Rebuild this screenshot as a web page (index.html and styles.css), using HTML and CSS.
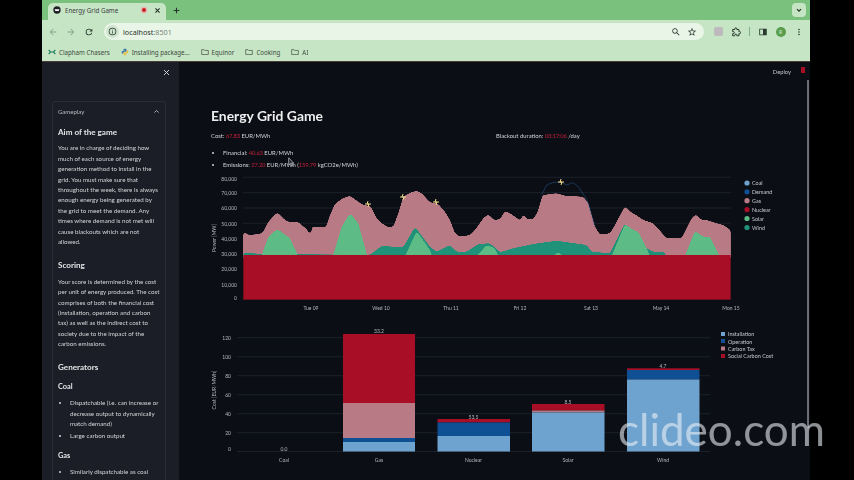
FILE: index.html
```html
<!DOCTYPE html>
<html lang="en">

<head>
    <meta charset="UTF-8">
    <meta name="viewport" content="width=device-width, initial-scale=1.0">
    <title>Energy Grid Game</title>
    <link rel="stylesheet" href="styles.css">
</head>

<body>
    <div class="browser">
        <div class="tabstrip">
            <div class="tab">
                <svg class="favicon" viewBox="0 0 12 12">
                    <circle cx="6" cy="6" r="5.5" class="ink"></circle>
                    <path d="M2.5 5h7l-1 2.5h-5z" class="white"></path>
                </svg>
                <span class="tab-title">Energy Grid Game</span>
                <svg class="rec" viewBox="0 0 12 12">
                    <circle cx="6" cy="6" r="5" class="rec-ring"></circle>
                    <circle cx="6" cy="6" r="3" class="rec-dot"></circle>
                </svg>
                <svg class="tab-x" viewBox="0 0 10 10"><path d="M2 2l6 6M8 2l-6 6" class="stroke-dark"></path></svg>
            </div>
            <svg class="plus" viewBox="0 0 10 10"><path d="M5 1v8M1 5h8" class="stroke-dark"></path></svg>
            <div class="tab-menu">
                <svg viewBox="0 0 10 10"><path d="M2.5 4l2.5 2.5L7.500 4" class="stroke-dark"></path></svg>
            </div>
        </div>

        <div class="toolbar">
            <svg class="tool faded" viewBox="0 0 24 24"><path d="M20 11H7.800l5.600-5.600L12 4l-8 8 8 8 1.400-1.400L7.800 13H20z"></path></svg>
            <svg class="tool faded" viewBox="0 0 24 24"><path d="M4 11h12.200l-5.600-5.600L12 4l8 8-8 8-1.400-1.400 5.600-5.600H4z"></path></svg>
            <svg class="tool" viewBox="0 0 24 24"><path d="M17.650 6.350A7.960 7.960 0 0 0 12 4a8 8 0 1 0 7.750 10h-2.080A6 6 0 1 1 12 6c1.660 0 3.140.69 4.220 1.780L13 11h7V4z"></path></svg>
            <div class="omnibox">
                <span class="site-info">
                    <svg viewBox="0 0 24 24"><path d="M11 7h2v2h-2zm0 4h2v6h-2zm1-9a10 10 0 1 0 0 20 10 10 0 0 0 0-20zm0 18a8 8 0 1 1 0-16 8 8 0 0 1 0 16z"></path></svg>
                </span>
                <span class="url">localhost<span class="port">:8501</span></span>
                <svg class="tool search" viewBox="0 0 24 24"><path d="M15.500 14h-.79l-.28-.27C15.410 12.590 16 11.110 16 9.500 16 5.910 13.090 3 9.500 3S3 5.910 3 9.500 5.910 16 9.500 16c1.610 0 3.090-.59 4.230-1.570l.27.28v.79l5 4.990L20.490 19l-4.990-5zm-6 0C7.010 14 5 11.990 5 9.500S7.010 5 9.500 5 14 7.010 14 9.500 11.990 14 9.500 14z"></path></svg>
                <svg class="tool" viewBox="0 0 24 24"><path d="M22 9.240l-7.190-.62L12 2 9.190 8.630 2 9.240l5.460 4.730L5.820 21 12 17.270 18.180 21l-1.630-7.030zM12 15.400l-3.760 2.270 1-4.280-3.320-2.880 4.380-.38L12 6.100l1.710 4.040 4.380.38-3.320 2.880 1 4.280z"></path></svg>
            </div>
            <span class="ext-badge"></span>
            <svg class="tool puzzle" viewBox="0 0 24 24"><path d="M4 6h5V4.500a2.500 2.500 0 0 1 5 0V6h5v5h1.500a2.500 2.500 0 0 1 0 5H19v5h-5v-1.500a2.500 2.500 0 0 0-5 0V21H4v-5h1.500a2.500 2.500 0 0 0 0-5H4z"></path></svg>
            <span class="tool-sep"></span>
            <svg class="tool" viewBox="0 0 24 24"><path d="M3 4h18v16H3zm2 2v12h7V6z" fill-rule="evenodd"></path></svg>
            <span class="avatar">R</span>
            <svg class="tool" viewBox="0 0 24 24"><path d="M12 8a2 2 0 1 0 0-4 2 2 0 0 0 0 4zm0 2a2 2 0 1 0 0 4 2 2 0 0 0 0-4zm0 6a2 2 0 1 0 0 4 2 2 0 0 0 0-4z"></path></svg>
        </div>

        <div class="bookmarks">
            <span class="bookmark first">
                <svg class="bm-icon" viewBox="0 0 12 12"><path d="M1 3l3 3-3 3M11 3L8 6l3 3M4 6h4" class="stroke-teal"></path></svg>
                Clapham Chasers
            </span>
            <span class="bookmark">
                <svg class="bm-icon" viewBox="0 0 12 12">
                    <path d="M6 1C4 1 3.500 2 3.500 3v1H6v.5H2.500C1.500 4.500 1 5.300 1 6.500S1.500 8.500 2.500 8.500h1V7c0-1 1-1.500 2-1.500h2C8 5.500 8.500 5 8.500 4.300V3C8.500 2 8 1 6 1z" class="py-blue"></path>
                    <path d="M6 11c2 0 2.500-1 2.500-2V8H6v-.5h3.500c1 0 1.500-.8 1.500-2s-.5-2-1.500-2h-1V5c0 1-1 1.500-2 1.500h-2C4 6.500 3.500 7 3.500 7.700V9c0 1 .5 2 2.500 2z" class="py-yellow"></path>
                </svg>
                Installing package...
            </span>
            <span class="bookmark">
                <svg class="bm-icon" viewBox="0 0 12 12"><path d="M1 2.500h3.500l1 1.200H11v6H1z" class="stroke-folder"></path></svg>
                Equinor
            </span>
            <span class="bookmark">
                <svg class="bm-icon" viewBox="0 0 12 12"><path d="M1 2.500h3.500l1 1.200H11v6H1z" class="stroke-folder"></path></svg>
                Cooking
            </span>
            <span class="bookmark">
                <svg class="bm-icon" viewBox="0 0 12 12"><path d="M1 2.500h3.500l1 1.200H11v6H1z" class="stroke-folder"></path></svg>
                AI
            </span>
        </div>

        <div class="app">
            <aside class="sidebar">
                <div class="sidebar-top">
                    <svg class="close" viewBox="0 0 10 10"><path d="M1.500 1.500l7 7M8.500 1.500l-7 7"></path></svg>
                </div>
                <div class="expander">
                    <div class="expander-head">
                        <span>Gameplay</span>
                        <svg viewBox="0 0 10 10"><path d="M2 6.500L5 3.500l3 3"></path></svg>
                    </div>
                    <h3 class="side-h first">Aim of the game</h3>
                    <p class="side-p">You are in charge of deciding how much of each source of energy generation method to install in the grid. You must make sure that throughout the week, there is always enough energy being generated by the grid to meet the demand. Any times where demand is not met will cause blackouts which are not allowed.</p>
                    <h3 class="side-h scoring">Scoring</h3>
                    <p class="side-p">Your score is determined by the cost per unit of energy produced. The cost comprises of both the financial cost (installation, operation and carbon tax) as well as the indirect cost to society due to the impact of the carbon emissions.</p>
                    <h3 class="side-h generators">Generators</h3>
                    <h4 class="side-sub coal">Coal</h4>
                    <ul class="side-list">
                        <li>Dispatchable (i.e. can increase or decrease output to dynamically match demand)</li>
                        <li>Large carbon output</li>
                    </ul>
                    <h4 class="side-sub gas">Gas</h4>
                    <ul class="side-list">
                        <li>Similarly dispatchable as coal</li>
                    </ul>
                </div>
            </aside>

            <main class="main">
                <div class="main-top">
                    <span class="deploy">Deploy</span>
                    <span class="st-menu"></span>
                </div>
                <div class="content">
                    <h1>Energy Grid Game</h1>
                    <div class="summary">
                        <div class="summary-cost">Cost: <span class="red">67.83</span> EUR/MWh</div>
                        <div>Blackout duration: <span class="red">03:17:06</span> /day</div>
                    </div>
                    <ul class="breakdown">
                        <li>Financial: <span class="red">40.63</span> EUR/MWh</li>
                        <li>Emissions: <span class="red">27.20</span> EUR/MWh (<span class="red">159.79</span> kgCO2e/MWh)</li>
                    </ul>
                </div>

                <svg class="chart chart-power" viewBox="200 170 610 150">
                    <defs>
                        <filter id="smooth" x="-5%" y="-5%" width="110%" height="110%" color-interpolation-filters="sRGB">
                            <feGaussianBlur stdDeviation="4"></feGaussianBlur>
                            <feColorMatrix values="1 0 0 0 0 0 1 0 0 0 0 0 1 0 0 0 0 0 14 -6.500"></feColorMatrix>
                        </filter>
                    </defs>
                    <g class="grid">
                        <path d="M243 177.300H731M243 192.700H731M243 208H731M243 223.300H731M243 238.700H731M243 254H731"></path>
                    </g>
                    <g transform="translate(200 170) scale(.3333)">
                        <path class="area-gas" filter="url(#smooth)" d="M130 270V183L145 195 180 192 190 185 205 155 232 127 255 150 270 157 295 156 320 178 332 195 338 165 345 172 378 172 390 135 405 102 428 85 450 77 475 95 490 105 512 108 530 145 545 160 565 172 580 170 595 130 610 80 630 68 650 62 665 70 690 97 715 102 735 125 750 150 765 190 780 200 810 195 825 180 850 145 865 133 882 150 900 148 915 123 930 130 955 147 962 153 970 130 980 148 1000 148 1013 125 1028 75 1070 70 1095 77 1150 80 1165 100 1185 170 1200 194 1230 190 1245 165 1275 108 1295 128 1305 133 1330 150 1360 160 1400 205 1445 205 1475 145 1488 133 1505 150 1520 150 1550 160 1570 165 1592 180V270Z"></path>
                        <path class="line-demand" d="M1025 75L1040 45 1060 37 1085 37 1100 45 1120 38 1135 50 1155 80 1165 100 1185 170"></path>
                        <path class="area-wind" filter="url(#smooth)" d="M130 270V247L180 252 510 254 545 228 610 232 645 170 690 230 710 245 750 225 770 245 800 245 835 222 870 220 900 247 940 235 1000 222 1070 212 1160 225 1175 245 1230 250 1275 160 1340 235 1360 245 1395 245 1400 270Z"></path>
                        <path class="area-solar" filter="url(#smooth)" d="M180 270L205 200 232 177 270 205 300 270ZM395 270L425 170 450 130 475 160 505 270ZM610 270L650 183 690 240 700 270ZM820 270L860 225 885 235 900 270ZM1045 270L1075 246 1105 270ZM1230 270L1275 162 1300 180 1315 185 1340 235 1355 270ZM1450 270L1485 183 1510 200 1530 200 1565 270Z"></path>
                        <rect class="area-nuclear" x="130" y="255" width="1462" height="134"></rect>
                    </g>
                    <g class="bolt">
                        <path d="M368 201l-1 3h2l-1 3M365 204h6"></path>
                        <path d="M403 194l-1 3h2l-1 3M400 197h6"></path>
                        <path d="M436 199l-1 3h2l-1 3M433 202h6"></path>
                        <path d="M561 179l-1 3h2l-1 3M558 182h6"></path>
                    </g>
                    <g class="tick end">
                        <text x="237" y="181">80,000</text>
                        <text x="237" y="195">70,000</text>
                        <text x="237" y="210">60,000</text>
                        <text x="237" y="225.500">50,000</text>
                        <text x="237" y="240.500">40,000</text>
                        <text x="237" y="256">30,000</text>
                        <text x="237" y="271">20,000</text>
                        <text x="237" y="286.500">10,000</text>
                        <text x="237" y="299.500">0</text>
                    </g>
                    <text class="tick" transform="translate(216 238) rotate(-90)" text-anchor="middle">Power [MW]</text>
                    <g class="tick mid">
                        <text x="311" y="310">Tue 09</text>
                        <text x="381" y="310">Wed 10</text>
                        <text x="451" y="310">Thu 11</text>
                        <text x="520" y="310">Fri 12</text>
                        <text x="591" y="310">Sat 13</text>
                        <text x="661" y="310">May 14</text>
                        <text x="731" y="310">Mon 15</text>
                    </g>
                    <g class="legend">
                        <circle cx="747" cy="183" r="2.600" class="c-coal"></circle>
                        <text x="752" y="185">Coal</text>
                        <circle cx="747" cy="191.800" r="2.600" class="c-demand"></circle>
                        <text x="752" y="193.800">Demand</text>
                        <circle cx="747" cy="200.700" r="2.600" class="c-gas"></circle>
                        <text x="752" y="202.700">Gas</text>
                        <circle cx="747" cy="209.600" r="2.600" class="c-nuclear"></circle>
                        <text x="752" y="211.600">Nuclear</text>
                        <circle cx="747" cy="218.500" r="2.600" class="c-solar"></circle>
                        <text x="752" y="220.500">Solar</text>
                        <circle cx="747" cy="227.500" r="2.600" class="c-wind"></circle>
                        <text x="752" y="229.500">Wind</text>
                    </g>
                </svg>

                <svg class="chart chart-cost" viewBox="200 320 610 160">
                    <g class="grid">
                        <path d="M237 337.700H710M237 356.700H710M237 375.700H710M237 394.700H710M237 413.700H710M237 432.700H710M237 451.500H710"></path>
                    </g>
                    <g class="tick end">
                        <text x="231" y="340">120</text>
                        <text x="231" y="359">100</text>
                        <text x="231" y="378">80</text>
                        <text x="231" y="397">60</text>
                        <text x="231" y="416">40</text>
                        <text x="231" y="435">20</text>
                        <text x="231" y="451">0</text>
                    </g>
                    <text class="tick" transform="translate(216 390) rotate(-90)" text-anchor="middle">Cost [EUR/MWh]</text>
                    <rect class="c-nuclear" x="343" y="334" width="72" height="69"></rect>
                    <rect class="c-gas" x="343" y="403" width="72" height="35"></rect>
                    <rect class="c-demand" x="343" y="438" width="72" height="4"></rect>
                    <rect class="c-coal" x="343" y="442" width="72" height="9.500"></rect>
                    <rect class="c-nuclear" x="437.500" y="419" width="72.500" height="3.500"></rect>
                    <rect class="c-demand" x="437.500" y="422.500" width="72.500" height="13.500"></rect>
                    <rect class="c-coal" x="437.500" y="436" width="72.500" height="15.500"></rect>
                    <rect class="c-nuclear" x="532" y="404" width="72.500" height="6.500"></rect>
                    <rect class="c-gas" x="532" y="410.500" width="72.500" height="2"></rect>
                    <rect class="c-coal" x="532" y="412.500" width="72.500" height="39"></rect>
                    <rect class="c-nuclear" x="627" y="368.300" width="72.500" height="1.700"></rect>
                    <rect class="c-demand" x="627" y="370" width="72.500" height="9.500"></rect>
                    <rect class="c-coal" x="627" y="379.500" width="72.500" height="72"></rect>
                    <g class="tick mid">
                        <text x="284" y="451">0.0</text>
                        <text x="379" y="333">33.2</text>
                        <text x="473.500" y="418.500">53.5</text>
                        <text x="568" y="403.500">8.5</text>
                        <text x="663" y="367.500">4.7</text>
                        <text x="284" y="462">Coal</text>
                        <text x="379" y="462">Gas</text>
                        <text x="473.500" y="462">Nuclear</text>
                        <text x="568" y="462">Solar</text>
                        <text x="663" y="462">Wind</text>
                    </g>
                    <g class="legend">
                        <rect x="721" y="332" width="4" height="4" class="c-coal"></rect>
                        <text x="728" y="336">Installation</text>
                        <rect x="721" y="339" width="4" height="4" class="c-demand"></rect>
                        <text x="728" y="343.500">Operation</text>
                        <rect x="721" y="346.500" width="4" height="4" class="c-gas"></rect>
                        <text x="728" y="350.500">Carbon Tax</text>
                        <rect x="721" y="354" width="4" height="4" class="c-nuclear"></rect>
                        <text x="728" y="358">Social Carbon Cost</text>
                    </g>
                </svg>

                <span class="scrollbar"></span>
            </main>
        </div>
    </div>

    <svg class="cursor" viewBox="0 0 10 14"><path d="M1 1v10l2.500-2 2 4 1.500-.8-2-3.700H8z"></path></svg>
    <span class="watermark">clideo.com</span>
</body>

</html>
```

FILE: styles.css
```css
html,
body {
    margin: 0;
    height: 480px;
    overflow: hidden;
    background-color: #000;
}

body {
    font-family: "Noto Sans", "Open Sans", sans-serif;
    position: relative;
}

.browser {
    width: 768px;
    height: 480px;
    margin-left: 42px;
    display: flex;
    flex-direction: column;
    filter: blur(0.3px);
}

/* browser chrome */
.tabstrip {
    height: 20px;
    flex: none;
    display: flex;
    align-items: flex-end;
    background-color: #7bc17e;
    padding-left: 6px;
    padding-right: 4px;
}

.tab {
    width: 118px;
    height: 17px;
    display: flex;
    align-items: center;
    background-color: #c6e5c5;
    border-radius: 5px 5px 0 0;
    padding: 0 5px 3px 5px;
    box-sizing: border-box;
}

.favicon {
    width: 8px;
    height: 8px;
    margin-right: 4px;
}

.ink {
    fill: #202124;
}

.white {
    fill: #fff;
}

.tab-title {
    font-size: 6.2px;
    color: #3c4043;
    flex: 1;
}

.rec {
    width: 8px;
    height: 8px;
    margin-right: 6px;
}

.rec-ring {
    fill: #eab3b8;
}

.rec-dot {
    fill: #c5221f;
}

.tab-x {
    width: 7px;
    height: 7px;
}

.stroke-dark {
    fill: none;
    stroke: #26332a;
    stroke-width: 1.5;
}

.plus {
    width: 7px;
    height: 7px;
    margin-left: 6.5px;
    margin-bottom: 6.5px;
}

.tab-menu {
    width: 14px;
    height: 14px;
    margin-left: auto;
    margin-bottom: 3px;
    background-color: #c6e5c5;
    border-radius: 4px;
    display: flex;
    align-items: center;
    justify-content: center;
}

.tab-menu svg {
    width: 8px;
    height: 8px;
}

.toolbar {
    height: 23px;
    flex: none;
    display: flex;
    align-items: center;
    gap: 8px;
    background-color: #c5e5c4;
    padding: 0 6px 0 6px;
}

.tool {
    width: 10px;
    height: 10px;
    flex: none;
    fill: #2b3a30;
}

.faded {
    fill: #85a08a;
}

.puzzle {
    fill: none;
    stroke: #2b3a30;
    stroke-width: 2.4;
}

.omnibox {
    flex: none;
    width: 600px;
    height: 17px;
    margin-left: 2px;
    margin-right: 1.5px;
    display: flex;
    align-items: center;
    gap: 6px;
    background-color: #e9f5e7;
    border-radius: 9px;
    padding-left: 2px;
    padding-right: 7px;
    box-sizing: border-box;
}

.site-info {
    width: 13px;
    height: 13px;
    border-radius: 50%;
    background-color: #cfe5cd;
    display: flex;
    align-items: center;
    justify-content: center;
    margin-right: -2px;
}

.site-info svg {
    width: 9px;
    height: 9px;
    fill: #2b3a30;
}

.url {
    font-size: 7.200px;
    color: #26332a;
    flex: 1;
}

.port {
    color: #75857a;
}

.ext-badge {
    width: 9px;
    height: 9px;
    flex: none;
    background-color: #bdb9bd;
    border-radius: 2px;
}

.tool-sep {
    width: 1px;
    height: 9px;
    flex: none;
    background-color: #7fb283;
}

.avatar {
    width: 10px;
    height: 10px;
    flex: none;
    border-radius: 50%;
    background-color: #5a9d4c;
    color: #dff0da;
    font-size: 5px;
    line-height: 10px;
    text-align: center;
}

.bookmarks {
    height: 19px;
    flex: none;
    box-sizing: border-box;
    display: flex;
    align-items: center;
    gap: 11px;
    background-color: #c5e5c4;
    border-bottom: 1px solid #4a3b34;
    padding-left: 6px;
    font-size: 6.2px;
    color: #3c4a40;
}

.bookmark {
    display: flex;
    align-items: center;
    gap: 3px;
}

.bm-icon {
    width: 8px;
    height: 8px;
}

.stroke-teal {
    fill: none;
    stroke: #1f7a5c;
    stroke-width: 1.6;
}

.stroke-folder {
    fill: none;
    stroke: #3c4a40;
    stroke-width: 1;
}

.py-blue {
    fill: #3f75a8;
}

.py-yellow {
    fill: #e3c24d;
}

/* streamlit app */
.app {
    flex: 1;
    display: flex;
    min-height: 0;
    font-family: Lato, "Noto Sans", sans-serif;
}

.sidebar {
    width: 137px;
    flex: none;
    background-color: #1b1e27;
    color: #d3d5d8;
    overflow: hidden;
}

.sidebar-top {
    height: 39px;
    display: flex;
    justify-content: flex-end;
    align-items: flex-start;
    padding: 7px 9px 0 0;
    box-sizing: border-box;
}

.close {
    width: 7px;
    height: 7px;
    fill: none;
    stroke: #d6d7da;
    stroke-width: 1.4;
}

.expander {
    width: 114px;
    margin-left: 10px;
    box-sizing: border-box;
    border: 1px solid #2a2d37;
    border-radius: 3px;
    padding: 0 5px 30px 5px;
}

.expander-head {
    height: 18px;
    display: flex;
    align-items: center;
    justify-content: space-between;
    font-size: 6px;
    color: #b9bbc0;
}

.expander-head svg {
    width: 7px;
    height: 7px;
    fill: none;
    stroke: #c9cbcf;
    stroke-width: 1.2;
}

.side-h {
    font-size: 8.100px;
    line-height: 12px;
    font-weight: 700;
    color: #e4e5e7;
    margin: 0;
}

.side-h.first {
    margin-top: 6px;
}

.side-h.scoring {
    margin-top: 12px;
}

.side-h.generators {
    margin-top: 11.5px;
}

.side-sub {
    font-size: 7.400px;
    line-height: 11px;
    font-weight: 700;
    color: #e4e5e7;
    margin: 0;
}

.side-sub.coal {
    margin-top: 7.5px;
}

.side-sub.gas {
    margin-top: 8.5px;
}

.side-p {
    font-size: 6.200px;
    line-height: 10.4px;
    margin: 5.4px 0 0 0;
}

.side-list {
    font-size: 6.200px;
    line-height: 10.4px;
    margin: 6.5px 0 0 0;
    padding-left: 12px;
}

.side-list li + li {
    margin-top: 1.300px;
}

.main {
    flex: 1;
    position: relative;
    background-color: #0b0e15;
    color: #d3d4d6;
    padding-left: 21px;
    overflow: hidden;
}

.main-top {
    height: 18px;
    display: flex;
    justify-content: flex-end;
    align-items: center;
    gap: 10px;
    padding-right: 5px;
}

.deploy {
    font-size: 5.8px;
    color: #c3c4c7;
}

.st-menu {
    width: 4px;
    height: 6px;
    margin-top: -3px;
    background-color: #a80f26;
}

.content {
    padding-left: 11px;
}

h1 {
    font-size: 13.900px;
    line-height: 20px;
    font-weight: 700;
    color: #eeeeef;
    margin: 26px 0 0 0;
}

.summary {
    display: flex;
    margin-top: 5px;
    font-size: 5.900px;
    line-height: 10px;
}

.summary-cost {
    width: 285px;
}

.red {
    color: #c02038;
    letter-spacing: -0.2px;
}

.breakdown {
    margin: 7px 0 0 0;
    padding-left: 12px;
    font-size: 5.900px;
    line-height: 10px;
}

.breakdown li + li {
    margin-top: 1.500px;
}

.chart {
    display: block;
    width: 610px;
    flex: none;
}

.chart-power {
    height: 150px;
    margin-top: 0.5px;
}

.chart-cost {
    height: 160px;
}

.grid path {
    fill: none;
    stroke: #1c2029;
    stroke-width: 1;
}

.tick {
    font-size: 5px;
    fill: #b6b8bc;
}

.tick.end {
    text-anchor: end;
}

.tick.mid {
    text-anchor: middle;
}

.legend {
    font-size: 5.450px;
    fill: #c9cbcf;
}

.area-gas,
.c-gas {
    fill: #b87a84;
}

.area-wind,
.c-wind {
    fill: #1f9279;
}

.area-solar,
.c-solar {
    fill: #5dbb85;
}

.area-nuclear,
.c-nuclear {
    fill: #a80f26;
}

.c-coal {
    fill: #6ea3cf;
}

.c-demand {
    fill: #0f4f94;
}

.line-demand {
    fill: none;
    stroke: #2b5f94;
    stroke-width: 1.500;
}

.bolt path {
    fill: none;
    stroke: #f0d987;
    stroke-width: 1;
}

.scrollbar {
    position: absolute;
    right: 1px;
    top: 18px;
    width: 2px;
    height: 348px;
    background-color: #6b6d72;
}

/* overlays on the recording */
.cursor {
    position: absolute;
    left: 288px;
    top: 157px;
    width: 7px;
    height: 10px;
    fill: #20242c;
    stroke: #c9cbcf;
    stroke-width: 1;
}

.watermark {
    position: absolute;
    left: 618px;
    top: 398px;
    font-family: Lato, sans-serif;
    font-size: 44px;
    line-height: 62px;
    font-weight: 400;
    color: rgba(235, 240, 245, 0.6);
}
```
